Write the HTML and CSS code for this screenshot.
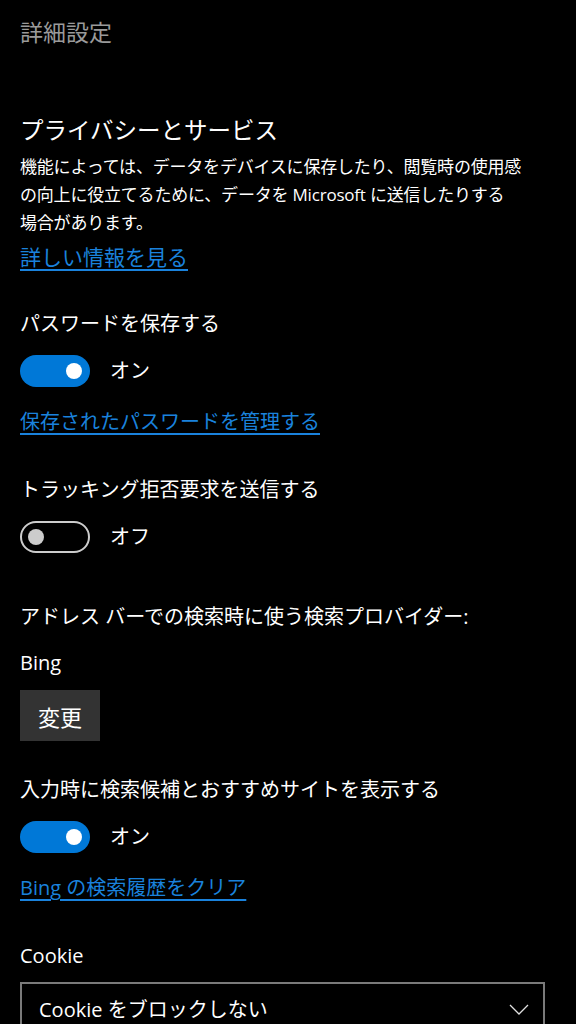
FILE: index.html
```html
<!DOCTYPE html>
<html lang="ja">
<head>
<meta charset="utf-8">
<title>詳細設定</title>
<link rel="stylesheet" href="styles.css">
</head>
<body>
<div class="page">
  <div class="page-title">詳細設定</div>

  <section class="intro">
    <h1 class="heading">プライバシーとサービス</h1>
    <p class="desc">機能によっては、データをデバイスに保存したり、閲覧時の使用感<br>の向上に役立てるために、データを Microsoft に送信したりする<br>場合があります。</p>
    <a class="link link-tight" href="#">詳しい情報を見る</a>
  </section>

  <section class="setting s-password">
    <div class="label">パスワードを保存する</div>
    <div class="toggle-row">
      <span class="toggle on"><span class="knob"></span></span>
      <span class="state">オン</span>
    </div>
    <a class="link" href="#">保存されたパスワードを管理する</a>
  </section>

  <section class="setting s-dnt">
    <div class="label">トラッキング拒否要求を送信する</div>
    <div class="toggle-row">
      <span class="toggle off"><span class="knob"></span></span>
      <span class="state">オフ</span>
    </div>
  </section>

  <section class="setting s-provider">
    <div class="label">アドレス バーでの検索時に使う検索プロバイダー:</div>
    <div class="value">Bing</div>
    <button class="btn" type="button">変更</button>
  </section>

  <section class="setting s-suggest">
    <div class="label">入力時に検索候補とおすすめサイトを表示する</div>
    <div class="toggle-row">
      <span class="toggle on"><span class="knob"></span></span>
      <span class="state">オン</span>
    </div>
    <a class="link" href="#">Bing の検索履歴をクリア</a>
  </section>

  <section class="setting s-cookie">
    <div class="label">Cookie</div>
    <div class="select">
      <span class="select-text">Cookie をブロックしない</span>
      <svg class="chevron" width="20" height="12" viewBox="0 0 20 12"><path d="M1 1 L10 10 L19 1" fill="none" stroke="#e0e0e0" stroke-width="1.3"/></svg>
    </div>
  </section>
</div>
</body>
</html>
```

FILE: styles.css
```css
html, body {
  margin: 0;
  padding: 0;
  background: #000;
}

body {
  font-family: "Open Sans", "Noto Sans CJK JP", sans-serif;
  color: #fff;
  overflow: hidden;
}

.page {
  padding: 17px 20px 0 20px;
  display: flex;
  flex-direction: column;
}

.page-title {
  font-size: 23px;
  line-height: 30px;
  color: #9a9a9a;
}

.intro {
  display: flex;
  flex-direction: column;
  align-items: flex-start;
  margin-top: 67px;
}

.heading {
  margin: 0;
  font-size: 23.5px;
  font-weight: 400;
  line-height: 32px;
}

.desc {
  margin: 7px 0 0 0;
  font-size: 17px;
  line-height: 28px;
  letter-spacing: -0.2px;
}

.link {
  display: inline-block;
  font-size: 20px;
  line-height: 30px;
  color: #1a82dc;
  text-decoration: underline;
  text-decoration-thickness: 2px;
  text-underline-offset: 4px;
}

.link-tight {
  margin-top: 5px;
  font-size: 21px;
}

.setting {
  display: flex;
  flex-direction: column;
  align-items: flex-start;
}

.label, .value, .state {
  font-size: 20px;
  line-height: 30px;
}

.s-password { margin-top: 37px; }
.s-dnt { margin-top: 38px; }
.s-provider { margin-top: 49px; }
.s-suggest { margin-top: 34px; }
.s-cookie { margin-top: 38px; }

.toggle-row {
  display: flex;
  align-items: center;
  gap: 20px;
  margin-top: 16px;
  height: 32px;
}

.s-password .link, .s-suggest .link {
  margin-top: 20px;
}

.toggle {
  box-sizing: border-box;
  width: 70px;
  height: 32px;
  border-radius: 16px;
  display: flex;
  align-items: center;
}

.toggle.on {
  background: #0078d7;
  justify-content: flex-end;
  padding-right: 8px;
}

.toggle.on .knob {
  background: #fff;
}

.toggle.off {
  border: 2px solid #cccccc;
  padding-left: 6px;
}

.toggle.off .knob {
  background: #cccccc;
}

.knob {
  width: 16px;
  height: 16px;
  border-radius: 50%;
}

.state {
  line-height: 32px;
}

.value {
  margin-top: 16px;
}

.btn {
  margin-top: 12px;
  width: 80px;
  height: 51px;
  border: none;
  background: #333333;
  color: #fff;
  font-family: "Open Sans", "Noto Sans CJK JP", sans-serif;
  font-size: 22px;
  padding: 0;
}

.select {
  box-sizing: border-box;
  margin-top: 11px;
  width: 525px;
  height: 52px;
  border: 2px solid #7a7a7a;
  display: flex;
  align-items: center;
  justify-content: space-between;
  padding: 0 14px 0 17px;
}

.select-text {
  font-size: 20px;
  line-height: 30px;
  margin-top: 4px;
}

.chevron {
  margin-top: 4px;
}
```
